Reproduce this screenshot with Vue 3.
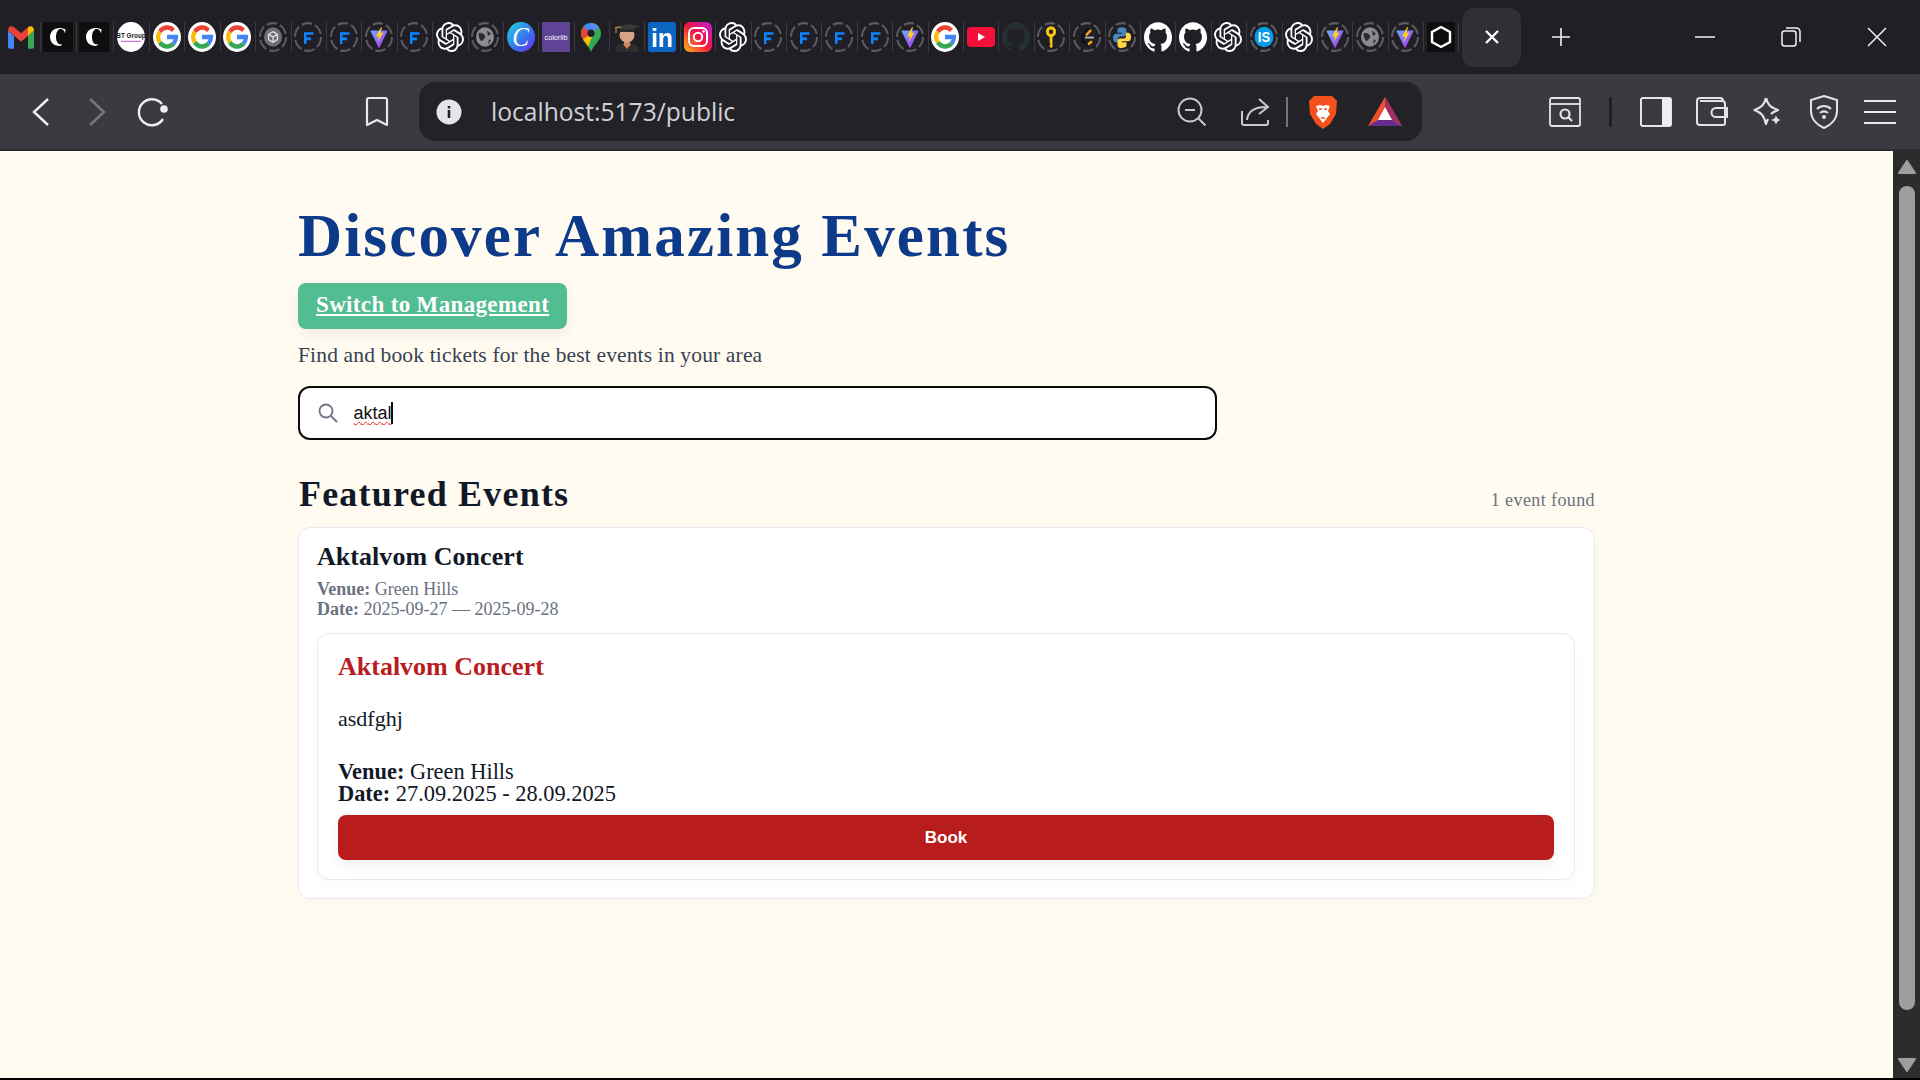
<script setup>
const tabs = [
  'gmail', 'c-logo', 'c-logo', 'bt', 'google', 'google', 'google', 'cube', 'flow', 'flow', 'vite', 'flow', 'openai', 'globe',
  'canva', 'colorlib', 'maps', 'avatar', 'linkedin', 'insta', 'openai', 'flow', 'flow', 'flow', 'flow', 'vite', 'google',
  'youtube', 'gh-dark', 'key', 'leet', 'python', 'github', 'github', 'openai', 'is', 'openai', 'vite', 'globe', 'vite', 'hex'
]
const openai = 'M22.2819 9.8211a5.9847 5.9847 0 0 0-.5157-4.9108 6.0462 6.0462 0 0 0-6.5098-2.9A6.0651 6.0651 0 0 0 4.9807 4.1818a5.9847 5.9847 0 0 0-3.9977 2.9 6.0462 6.0462 0 0 0 .7427 7.0966 5.98 5.98 0 0 0 .511 4.9107 6.051 6.051 0 0 0 6.5146 2.9001A5.9847 5.9847 0 0 0 13.2599 24a6.0557 6.0557 0 0 0 5.7718-4.2058 5.9894 5.9894 0 0 0 3.9977-2.9001 6.0557 6.0557 0 0 0-.7475-7.0729zm-9.022 12.6081a4.4755 4.4755 0 0 1-2.8764-1.0408l.1419-.0804 4.7783-2.7582a.7948.7948 0 0 0 .3927-.6813v-6.7369l2.02 1.1686a.071.071 0 0 1 .038.052v5.5826a4.504 4.504 0 0 1-4.4945 4.4944zm-9.6607-4.1254a4.4708 4.4708 0 0 1-.5346-3.0137l.142.0852 4.783 2.7582a.7712.7712 0 0 0 .7806 0l5.8428-3.3685v2.3324a.0804.0804 0 0 1-.0332.0615L9.74 19.9502a4.4992 4.4992 0 0 1-6.1408-1.6464zM2.3408 7.8956a4.485 4.485 0 0 1 2.3655-1.9728V11.6a.7664.7664 0 0 0 .3879.6765l5.8144 3.3543-2.0201 1.1685a.0757.0757 0 0 1-.071 0l-4.8303-2.7865A4.504 4.504 0 0 1 2.3408 7.872zm16.5963 3.8558L13.1038 8.364 15.1192 7.2a.0757.0757 0 0 1 .071 0l4.8303 2.7913a4.4944 4.4944 0 0 1-.6765 8.1042v-5.6772a.79.79 0 0 0-.407-.667zm2.0107-3.0231l-.142-.0852-4.7735-2.7818a.7759.7759 0 0 0-.7854 0L9.409 9.2297V6.8974a.0662.0662 0 0 1 .0284-.0615l4.8303-2.7866a4.4992 4.4992 0 0 1 6.6802 4.66zM8.3065 12.863l-2.02-1.1638a.0804.0804 0 0 1-.038-.0567V6.0742a4.4992 4.4992 0 0 1 7.3757-3.4537l-.142.0805L8.704 5.459a.7948.7948 0 0 0-.3927.6813zm1.0976-2.3654l2.602-1.4998 2.6069 1.4998v2.9994l-2.5974 1.4997-2.6067-1.4997Z'
const github = 'M12 .297c-6.63 0-12 5.373-12 12 0 5.303 3.438 9.8 8.205 11.385.6.113.82-.258.82-.577 0-.285-.01-1.04-.015-2.04-3.338.724-4.042-1.61-4.042-1.61C4.422 18.07 3.633 17.7 3.633 17.7c-1.087-.744.084-.729.084-.729 1.205.084 1.838 1.236 1.838 1.236 1.07 1.835 2.809 1.305 3.495.998.108-.776.417-1.305.76-1.605-2.665-.3-5.466-1.332-5.466-5.93 0-1.31.465-2.38 1.235-3.22-.135-.303-.54-1.523.105-3.176 0 0 1.005-.322 3.3 1.23.96-.267 1.98-.399 3-.405 1.02.006 2.04.138 3 .405 2.28-1.552 3.285-1.23 3.285-1.23.645 1.653.24 2.873.12 3.176.765.84 1.23 1.91 1.23 3.22 0 4.61-2.805 5.625-5.475 5.92.42.36.81 1.096.81 2.22 0 1.606-.015 2.896-.015 3.286 0 .315.21.69.825.57C20.565 22.092 24 17.592 24 12.297c0-6.627-5.373-12-12-12'
</script>

<template>
  <div class="window">
    <svg class="defs" width="0" height="0">
      <defs>
        <linearGradient id="vg" x1="0" y1="0" x2="1" y2="1"><stop offset="0" stop-color="#6ea8ff" /><stop offset="1" stop-color="#b030f0" /></linearGradient>
        <linearGradient id="cg" x1="0" y1="0" x2="1" y2="1"><stop offset="0" stop-color="#1fd6d8" /><stop offset=".6" stop-color="#3a6ef0" /><stop offset="1" stop-color="#6a2ee8" /></linearGradient>
        <linearGradient id="ig" x1="0" y1="1" x2="1" y2="0"><stop offset="0" stop-color="#fdc014" /><stop offset=".5" stop-color="#f5133f" /><stop offset="1" stop-color="#b820d8" /></linearGradient>
        <symbol id="ring" viewBox="0 0 28 28" preserveAspectRatio="none"><circle cx="14" cy="14" r="13" fill="none" stroke="#5c5c60" stroke-width="2" stroke-dasharray="10.4 3.2" /></symbol>
        <symbol id="gmail" viewBox="0 0 28 28" preserveAspectRatio="none">
          <path d="M1 8v15a2 2 0 0 0 2 2h4V13z" fill="#4285f4" />
          <path d="M27 8v15a2 2 0 0 1-2 2h-4V13z" fill="#34a853" />
          <path d="M1 8c0-4 4-5 6-3l7 5.5L21 5v8l-7 5.5z" fill="#ea4335" />
          <path d="M21 5c2-2 6-1 6 3l-6 5z" fill="#fbbc04" />
        </symbol>
        <symbol id="c-logo" viewBox="0 0 30 30" preserveAspectRatio="none">
          <rect width="30" height="30" fill="#0e0e0e" />
          <path d="M17 6C10 6 7 10.500 7 15c0 5 3.500 9 10 9l2.500-1.500C14.500 23 13 19 13 15c0-4 1.500-7.500 4-8 2.500-.3 4.500 1.500 5 4.500l.5-4C20.500 6.500 18.500 6 17 6z" fill="#fff" />
        </symbol>
        <symbol id="bt" viewBox="0 0 28 28" preserveAspectRatio="none">
          <circle cx="14" cy="14" r="14" fill="#fff" />
          <text x="14" y="15" text-anchor="middle" font-family="Liberation Sans" font-size="6.400" font-weight="700" fill="#222">BT Group</text>
          <path d="M4 18h20" stroke="#c060d8" stroke-width="1" />
        </symbol>
        <symbol id="google" viewBox="0 0 28 28" preserveAspectRatio="none">
          <circle cx="14" cy="14" r="14" fill="#fff" />
          <g fill="none" stroke-width="4.200">
            <path d="M6.800 9A9 9 0 0 1 20.500 7.800" stroke="#ea4335" />
            <path d="M6.800 9a9 9 0 0 0 0 10" stroke="#fbbc04" />
            <path d="M6.800 19A9 9 0 0 0 20.500 20.200" stroke="#34a853" />
            <path d="M20.500 20.200a9 9 0 0 0 2.500-6.200H14" stroke="#4285f4" />
          </g>
        </symbol>
        <symbol id="cube" viewBox="0 0 28 28" preserveAspectRatio="none">
          <use href="#ring" width="28" height="28" />
          <circle cx="14" cy="14" r="9" fill="#6d6f76" />
          <path d="M14 9l4.500 2.500v5L14 19l-4.500-2.500v-5zM9.500 11.500L14 14l4.500-2.500M14 14v5" fill="none" stroke="#e4e4e6" stroke-width="1.200" />
        </symbol>
        <symbol id="flow" viewBox="0 0 28 28" preserveAspectRatio="none">
          <use href="#ring" width="28" height="28" />
          <path d="M10 9.500h9.500v2.500h-7v2.500H17V17h-4.500v3.500H10z" fill="#0a84ff" />
        </symbol>
        <symbol id="vite" viewBox="0 0 28 28" preserveAspectRatio="none">
          <use href="#ring" width="28" height="28" />
          <path d="M6 8.500h16L14 23.500z" fill="url(#vg)" stroke="url(#vg)" stroke-width="1" stroke-linejoin="round" />
          <path d="M16 5l-5 8.500h3L12.500 19l6-9h-3l1.500-5z" fill="#ffcf1f" />
        </symbol>
        <symbol id="openai" viewBox="0 0 24 24" preserveAspectRatio="none">
          <path :d="openai" fill="#fff" />
        </symbol>
        <symbol id="globe" viewBox="0 0 28 28" preserveAspectRatio="none">
          <use href="#ring" width="28" height="28" />
          <circle cx="14" cy="14" r="9" fill="#8a8c92" />
          <path d="M8 10c3 0 5 1 6 3s-2 3-3 5c-2-1-4-4-3-8zM16 8l4 3-3 2zM18 16l2 1-3 4z" fill="#2b2b30" />
        </symbol>
        <symbol id="canva" viewBox="0 0 28 28" preserveAspectRatio="none">
          <circle cx="14" cy="14" r="14" fill="url(#cg)" />
          <text x="13.500" y="22" text-anchor="middle" font-family="Liberation Serif" font-style="italic" font-size="25" fill="#fff">C</text>
        </symbol>
        <symbol id="colorlib" viewBox="0 0 28 30" preserveAspectRatio="none">
          <rect width="28" height="30" fill="#5f4395" />
          <text x="14" y="17.500" text-anchor="middle" font-family="Liberation Sans" font-size="7.200" fill="#fff">colorlib</text>
        </symbol>
        <symbol id="maps" viewBox="0 0 28 28" preserveAspectRatio="none">
          <path d="M14 1c-6 0-10 4.500-10 10 0 6 7 10 10 17 3-7 10-11 10-17 0-5.500-4-10-10-10z" fill="#34a853" />
          <path d="M14 1a10 10 0 0 0-7.500 3.400L14 11z" fill="#4285f4" />
          <path d="M6.500 4.400A10 10 0 0 0 4 11c0 2 .8 3.600 2 5.300L14 11z" fill="#ea4335" />
          <path d="M6 16.300c1.500 2 3.600 4 5 6.500l8-17L14 11z" fill="#fbbc04" />
          <path d="M14 1a10 10 0 0 1 8 4L14 11z" fill="#5a8df0" />
          <circle cx="14" cy="10.500" r="3.500" fill="#1f1f25" />
        </symbol>
        <symbol id="avatar" viewBox="0 0 28 30" preserveAspectRatio="none">
          <path d="M2 30c0-7 5-9 12-9s12 2 12 9z" fill="#2e2e2e" />
          <path d="M10 22l4 5 4-5z" fill="#e57b3a" />
          <rect x="11" y="17" width="6" height="7" fill="#c58c6c" />
          <ellipse cx="14" cy="13" rx="7.500" ry="7.500" fill="#d9a383" />
          <path d="M1 5.500L16 2l11 2.500L14 9z" fill="#3a3a3a" />
          <path d="M7 7h14v3H7z" fill="#2b2b2b" />
          <path d="M2 5.500l6-.5M3 5.500V11" stroke="#c9a227" stroke-width="1" fill="none" />
        </symbol>
        <symbol id="linkedin" viewBox="0 0 26 26" preserveAspectRatio="none">
          <rect width="26" height="26" rx="2" fill="#0a66c2" />
          <text x="13" y="22" text-anchor="middle" font-family="Liberation Sans" font-size="23" font-weight="700" fill="#fff">in</text>
        </symbol>
        <symbol id="insta" viewBox="0 0 28 30" preserveAspectRatio="none">
          <rect width="28" height="30" rx="6" fill="url(#ig)" />
          <rect x="5" y="6" width="18" height="18" rx="5" fill="none" stroke="#fff" stroke-width="2" />
          <circle cx="14" cy="15" r="4.200" fill="none" stroke="#fff" stroke-width="2" />
          <circle cx="19.500" cy="9.500" r="1.200" fill="#fff" />
        </symbol>
        <symbol id="youtube" viewBox="0 0 28 30" preserveAspectRatio="none">
          <rect y="5" width="28" height="20" rx="4" fill="#f5103a" />
          <path d="M11 11l7 4-7 4z" fill="#fff" />
        </symbol>
        <symbol id="github" viewBox="0 0 24 24" preserveAspectRatio="none">
          <path :d="github" fill="#fff" />
        </symbol>
        <symbol id="gh-dark" viewBox="0 0 24 24" preserveAspectRatio="none">
          <path :d="github" fill="#263031" />
        </symbol>
        <symbol id="key" viewBox="0 0 28 28" preserveAspectRatio="none">
          <use href="#ring" width="28" height="28" />
          <circle cx="14" cy="9" r="3.600" fill="none" stroke="#f5c518" stroke-width="3" />
          <path d="M12.700 12h2.800v11l-1.300 1.500-1.500-1.500v-1.500l1-1-1-1z" fill="#f5c518" />
        </symbol>
        <symbol id="leet" viewBox="0 0 28 28" preserveAspectRatio="none">
          <use href="#ring" width="28" height="28" />
          <path d="M16 6l-7 7.500 1.500 5 5 2.500" fill="none" stroke="#111" stroke-width="2.500" />
          <path d="M18 7.500L13 12.500M15 21l4-3" fill="none" stroke="#f89f1b" stroke-width="2.500" />
          <path d="M12 14.500h9" stroke="#b0b0b0" stroke-width="1.800" />
        </symbol>
        <symbol id="python" viewBox="0 0 28 28" preserveAspectRatio="none">
          <use href="#ring" width="28" height="28" />
          <path d="M14 5c-3.500 0-4.500 1-4.500 3v2H14v1H8c-2 0-3 1.500-3 4s1 4 3 4h2v-3c0-1.500 1-2.500 2.500-2.500H16c1.500 0 2.500-1 2.500-2.500V8c0-2-1.500-3-4.500-3z" fill="#4a86bd" />
          <path d="M14 24c3.500 0 4.500-1 4.500-3v-2H14v-1h6c2 0 3-1.500 3-4s-1-4-3-4h-2v3c0 1.500-1 2.500-2.500 2.500H12c-1.500 0-2.500 1-2.500 2.500v3.500c0 2 1.500 3 4.500 3z" fill="#ffd648" />
        </symbol>
        <symbol id="is" viewBox="0 0 28 28" preserveAspectRatio="none">
          <use href="#ring" width="28" height="28" />
          <circle cx="14" cy="14" r="9.500" fill="#0a9bea" />
          <text x="14" y="19" text-anchor="middle" font-family="Liberation Sans" font-size="13" font-weight="700" fill="#fff">IS</text>
        </symbol>
        <symbol id="hex" viewBox="0 0 28 30" preserveAspectRatio="none">
          <rect width="28" height="30" rx="2" fill="#0e0e0e" />
          <path d="M14 5l9 5v10l-9 5-9-5V10z" fill="none" stroke="#fff" stroke-width="2.400" />
        </symbol>
      </defs>
    </svg>

    <header class="titlebar">
      <div class="strip">
        <div v-for="(t, i) in tabs" :key="i" :class="['slot', { wide: i < 4 }]">
          <svg :class="['fav', t]"><use :href="'#' + t" width="100%" height="100%" /></svg>
        </div>
      </div>
      <div class="active-tab">
        <svg width="16" height="16" viewBox="0 0 16 16"><path d="M2 2l12 12M14 2L2 14" stroke="#fff" stroke-width="2.400" /></svg>
      </div>
      <div class="newtab">
        <svg width="20" height="20" viewBox="0 0 20 20"><path d="M10 1v18M1 10h18" stroke="#f2f2f2" stroke-width="1.600" /></svg>
      </div>
      <div class="controls">
        <div class="ctl"><svg width="20" height="20" viewBox="0 0 20 20"><path d="M0 10h20" stroke="#f2f2f2" stroke-width="1.500" /></svg></div>
        <div class="ctl"><svg width="20" height="20" viewBox="0 0 20 20" fill="none" stroke="#f2f2f2" stroke-width="1.500"><rect x="1" y="4" width="14" height="15" rx="2.500" /><path d="M5 1h10.500A3.500 3.500 0 0 1 19 4.500V15" /></svg></div>
        <div class="ctl"><svg width="20" height="20" viewBox="0 0 20 20"><path d="M1 1l18 18M19 1L1 19" stroke="#f2f2f2" stroke-width="1.500" /></svg></div>
      </div>
    </header>

    <nav class="toolbar">
      <div class="btn"><svg width="20" height="30" viewBox="0 0 20 30"><path d="M17 2L3 15l14 13" fill="none" stroke="#f0f0f2" stroke-width="2.400" /></svg></div>
      <div class="btn"><svg width="20" height="30" viewBox="0 0 20 30"><path d="M3 2l14 13L3 28" fill="none" stroke="#77777b" stroke-width="2.400" /></svg></div>
      <div class="btn"><svg width="32" height="32" viewBox="0 0 32 32"><path d="M26 23a13 13 0 1 1-1-15" fill="none" stroke="#f0f0f2" stroke-width="2.400" /><circle cx="27" cy="13" r="3.800" fill="#f0f0f2" /></svg></div>
      <div class="btn bookmark"><svg width="24" height="32" viewBox="0 0 24 32"><path d="M2 4a2 2 0 0 1 2-2h16a2 2 0 0 1 2 2v25l-10-5-10 5z" fill="none" stroke="#e8e8ea" stroke-width="2.200" stroke-linejoin="round" /></svg></div>

      <div class="urlbar">
        <svg class="info" width="26" height="26" viewBox="0 0 26 26"><circle cx="13" cy="13" r="12.500" fill="#e4e4ea" /><path d="M11.700 11h2.600v8h-2.600zM11.700 7h2.600v2.500h-2.600z" fill="#222227" /></svg>
        <span class="url">localhost:5173/public</span>
        <div class="url-actions">
          <div class="url-btn wide"><svg width="30" height="30" viewBox="0 0 30 30" fill="none" stroke="#c9c9cd" stroke-width="2"><circle cx="13" cy="13" r="11.500" /><path d="M8 13h10M21 21l7.500 7.500" /></svg></div>
          <div class="url-btn"><svg width="30" height="30" viewBox="0 0 30 30" fill="none" stroke="#c9c9cd" stroke-width="2"><path d="M2 14v12a2 2 0 0 0 2 2h22a2 2 0 0 0 2-2v-3M7 23c1-9 8-13 19-13M19 2l9 8-9 7" /></svg></div>
          <div class="url-sep"></div>
          <div class="url-btn brave"><svg width="30" height="34" viewBox="0 0 30 34"><path d="M6 1h18l5 5-1 13-6 10-7 5-7-5-6-10L1 6z" fill="#f4501c" /><path d="M8 11l4-1 3 1 3-1 4 1-2 5 2 3-7 9-7-9 2-3z" fill="#fff" /><path d="M11 14h3M16 14h3M13 23h4" stroke="#f4501c" stroke-width="1.500" /></svg></div>
          <div class="url-btn"><svg width="34" height="30" viewBox="0 0 34 30"><path d="M17 0L0 29h34z" fill="#ef4f2c" /><path d="M17 0l17 29-10-6-7-13z" fill="#a02f6a" /><path d="M0 29l10-6h14l10 6z" fill="#662d91" /><path d="M17 10l7 13H10z" fill="#fff" /></svg></div>
        </div>
      </div>

      <div class="btn find"><svg width="32" height="30" viewBox="0 0 32 30" fill="none" stroke="#e4e4e6" stroke-width="1.800"><rect x="1" y="1" width="30" height="28" rx="2" /><path d="M1 7h30" /><circle cx="16" cy="17" r="4.500" stroke-width="2.200" /><path d="M19 20l4 4" stroke-width="2.200" /></svg></div>
      <div class="tool-sep"></div>
      <div class="btn"><svg width="32" height="30" viewBox="0 0 32 30"><rect x="1" y="1" width="30" height="28" rx="2" fill="none" stroke="#e4e4e6" stroke-width="2" /><rect x="22" y="1" width="9" height="28" rx="1" fill="#eeeef0" /></svg></div>
      <div class="btn"><svg width="32" height="30" viewBox="0 0 32 30" fill="none" stroke="#e4e4e6" stroke-width="2"><path d="M4 4h22a3 3 0 0 1 3 3v19a2 2 0 0 1-2 2H4a3 3 0 0 1-3-3V4a3 3 0 0 1 3-3h20a3 3 0 0 1 3 3" /><path d="M31 11H20a4 4 0 0 0 0 9h11z" /></svg></div>
      <div class="btn"><svg width="32" height="32" viewBox="0 0 32 32" fill="none" stroke="#e4e4e6" stroke-width="2.200" stroke-linejoin="round"><path d="M14 2c2 7 4 9 12 12-3 1.500-5 2-7 4M14 2c-2 7-4 9-11.500 12C10 17 12 20 14 28c.5-2 1-3 2-5" /><path d="M24 19c.7 3 1.500 4 5 5-3.500 1-4.300 2-5 5-.7-3-1.500-4-5-5 3.500-1 4.300-2 5-5z" fill="#e4e4e6" stroke="none" /></svg></div>
      <div class="btn"><svg width="28" height="34" viewBox="0 0 28 34" fill="none" stroke="#e4e4e6" stroke-width="2"><path d="M14 1l13 4v11c0 8-6 14-13 17C7 30 1 24 1 16V5z" /><path d="M7 14c4-4 10-4 14 0M10 18c2.500-2 5.500-2 8 0" /><circle cx="14" cy="22" r="1" fill="#e4e4e6" /></svg></div>
      <div class="btn"><svg width="32" height="26" viewBox="0 0 32 26"><path d="M0 2h32M0 13h32M0 24h32" stroke="#e8e8ea" stroke-width="2.200" /></svg></div>
    </nav>

    <div class="viewport">
      <main class="page">
        <div class="container">
          <h1>Discover Amazing Events</h1>
          <a class="switch" href="#">Switch to Management</a>
          <p class="lead">Find and book tickets for the best events in your area</p>

          <div class="search">
            <svg width="20" height="20" viewBox="0 0 20 20" fill="none" stroke="#6b7280" stroke-width="1.800"><circle cx="8" cy="8" r="6.500" /><path d="M13 13l6 6" /></svg>
            <span class="query">aktal</span><span class="caret"></span>
          </div>

          <div class="section-head">
            <h2>Featured Events</h2>
            <span class="count">1 event found</span>
          </div>

          <section class="card">
            <h3>Aktalvom Concert</h3>
            <div class="meta"><b>Venue:</b> Green Hills</div>
            <div class="meta"><b>Date:</b> 2025-09-27 — 2025-09-28</div>

            <article class="inner">
              <h4>Aktalvom Concert</h4>
              <p class="desc">asdfghj</p>
              <div class="line"><b>Venue:</b> Green Hills</div>
              <div class="line"><b>Date:</b> 27.09.2025 - 28.09.2025</div>
              <button class="book">Book</button>
            </article>
          </section>
        </div>
      </main>
      <aside class="scrollbar">
        <svg width="20" height="14" viewBox="0 0 20 14"><path d="M10 1l8 12H2z" fill="#9e9e9e" stroke="#9e9e9e" stroke-width="2" stroke-linejoin="round" /></svg>
        <div class="thumb"></div>
        <svg width="20" height="14" viewBox="0 0 20 14"><path d="M10 13L2 1h16z" fill="#9e9e9e" stroke="#9e9e9e" stroke-width="2" stroke-linejoin="round" /></svg>
      </aside>
    </div>
  </div>
</template>

<style>
html, body {
  margin: 0;
  height: 100%;
  overflow: hidden;
}
</style>

<style scoped>
.window {
  width: 1920px;
  height: 1080px;
  display: flex;
  flex-direction: column;
  background: #000;
}
.defs {
  position: absolute;
}

.titlebar {
  height: 74px;
  flex: none;
  display: flex;
  align-items: center;
  background: #1f1f25;
}
.strip {
  display: flex;
  align-items: center;
  padding-left: 3px;
}
.slot {
  width: 35.4px;
  height: 30px;
  display: flex;
  align-items: center;
  justify-content: center;
  box-shadow: 1px 0 0 #3a3a40;
}
.slot.wide {
  width: 36.5px;
}
.fav {
  width: 28px;
  height: 30px;
  flex: none;
}
.fav.c-logo {
  width: 30px;
}
.active-tab {
  width: 59px;
  height: 59px;
  margin-left: 4px;
  border-radius: 12px;
  background: #2f2f35;
  display: flex;
  align-items: center;
  justify-content: center;
}
.newtab {
  width: 30px;
  margin-left: 25px;
  display: flex;
  justify-content: center;
}
.controls {
  margin-left: auto;
  display: flex;
}
.ctl {
  width: 86px;
  display: flex;
  justify-content: center;
}

.toolbar {
  height: 77px;
  flex: none;
  box-sizing: border-box;
  border-bottom: 2px solid #2b2b30;
  padding-left: 13px;
  display: flex;
  align-items: center;
  background: #3a3a40;
}
.btn {
  width: 56px;
  flex: none;
  display: flex;
  align-items: center;
  justify-content: center;
}
.bookmark {
  margin-left: 168px;
}
.urlbar {
  width: 1003px;
  height: 59px;
  margin-left: 14px;
  padding: 0 6px 0 17px;
  box-sizing: border-box;
  border-radius: 16px;
  background: #222227;
  display: flex;
  align-items: center;
}
.url {
  margin-left: 29px;
  font: 24.600px "Open Sans", sans-serif;
  color: #d0d1d6;
}
.url-actions {
  margin-left: auto;
  display: flex;
  align-items: center;
}
.url-btn {
  width: 62px;
  display: flex;
  justify-content: center;
}
.url-btn.wide {
  width: 64px;
}
.url-btn.brave {
  width: 66px;
  padding-left: 3px;
  box-sizing: border-box;
}
.url-sep {
  width: 2px;
  height: 30px;
  background: #77777b;
}
.find {
  margin-left: 115px;
}
.tool-sep {
  width: 3px;
  height: 30px;
  margin: 0 16px;
  border-radius: 2px;
  background: #1f1f25;
}

.viewport {
  flex: 1;
  display: flex;
  min-height: 0;
  margin-bottom: 2px;
}
.page {
  flex: 1;
  background: #fffbf0;
  color: #111827;
  font-family: "Liberation Serif", serif;
}
.container {
  width: 1297px;
  margin: 0 auto;
  padding-top: 51px;
}
h1 {
  margin: 0;
  font-size: 61px;
  letter-spacing: 2.150px;
  line-height: 68px;
  font-weight: 700;
  color: #0e3a8a;
}
.switch {
  display: inline-block;
  margin-top: 13px;
  padding: 0 18px;
  height: 46px;
  line-height: 44px;
  border-radius: 8px;
  background: #52bd92;
  color: #fff;
  font-size: 23px;
  letter-spacing: 0.350px;
  font-weight: 700;
  box-shadow: 0 6px 14px rgba(0, 0, 0, 0.06);
}
.lead {
  margin: 14px 0 0;
  font-size: 21.500px;
  letter-spacing: 0.150px;
  line-height: 24px;
  color: #374151;
}
.search {
  width: 919px;
  height: 54px;
  margin-top: 19px;
  padding-left: 17.500px;
  box-sizing: border-box;
  border: 2.500px solid #0b0b0b;
  border-radius: 12px;
  background: #fff;
  display: flex;
  align-items: center;
  font: 18px "Liberation Sans", sans-serif;
  color: #111;
}
.query {
  margin-left: 16px;
  text-decoration: underline wavy #e81c1c 1px;
  text-underline-offset: 2px;
}
.caret {
  width: 2px;
  height: 22px;
  margin-left: -1px;
  background: #111;
}
.section-head {
  margin-top: 33px;
  display: flex;
  align-items: baseline;
  justify-content: space-between;
  padding-left: 1px;
}
h2 {
  margin: 0;
  font-size: 36px;
  letter-spacing: 1.200px;
  line-height: 42px;
  font-weight: 700;
  color: #111827;
}
.count {
  font-size: 18px;
  letter-spacing: 0.400px;
  color: #6b7280;
}
.card {
  margin-top: 12px;
  padding: 15px 19px 18px 18px;
  box-sizing: border-box;
  height: 372px;
  border: 1px solid #e8e9ef;
  border-radius: 12px;
  background: #fff;
  box-shadow: 0 8px 18px rgba(0, 0, 0, 0.02);
}
h3 {
  margin: 0;
  font-size: 26px;
  letter-spacing: 0.050px;
  line-height: 28px;
  font-weight: 700;
  color: #111827;
}
.meta {
  font-size: 18px;
  line-height: 19.500px;
  color: #6b7280;
}
h3 + .meta {
  margin-top: 9px;
}
.inner {
  margin-top: 14px;
  padding: 17px 20px 20px;
  height: 247px;
  box-sizing: border-box;
  border: 1px solid #e8e9ef;
  border-radius: 12px;
  background: #fff;
  box-shadow: 0 6px 14px rgba(0, 0, 0, 0.025);
}
h4 {
  margin: 0;
  font-size: 26px;
  line-height: 32px;
  font-weight: 700;
  color: #b91c1c;
}
.desc {
  margin: 25px 0 31px;
  font-size: 22px;
  line-height: 22px;
  color: #111827;
}
.line {
  font-size: 22.400px;
  line-height: 22px;
  color: #111827;
}
.book {
  display: block;
  width: 100%;
  height: 45px;
  margin-top: 10px;
  border: 0;
  border-radius: 8px;
  background: #b91c1c;
  color: #fff;
  font: 700 17px "Liberation Sans", sans-serif;
  box-shadow: 0 6px 14px rgba(0, 0, 0, 0.06);
}

.scrollbar {
  width: 27px;
  flex: none;
  background: #2c2c2c;
  display: flex;
  flex-direction: column;
  align-items: center;
  padding: 9px 0 6px;
  box-sizing: border-box;
}
.thumb {
  width: 16px;
  height: 824px;
  margin-top: 12px;
  margin-bottom: auto;
  border-radius: 8px;
  background: #9e9e9e;
}
</style>
